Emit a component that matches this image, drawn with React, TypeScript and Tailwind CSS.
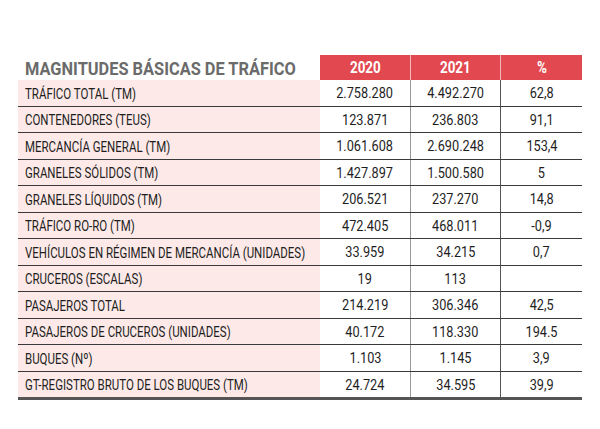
import React from "react";

const rows: [string, string, string, string][] = [
  ["TRÁFICO TOTAL (TM)", "2.758.280", "4.492.270", "62,8"],
  ["CONTENEDORES (TEUS)", "123.871", "236.803", "91,1"],
  ["MERCANCÍA GENERAL (TM)", "1.061.608", "2.690.248", "153,4"],
  ["GRANELES SÓLIDOS (TM)", "1.427.897", "1.500.580", "5"],
  ["GRANELES LÍQUIDOS (TM)", "206.521", "237.270", "14,8"],
  ["TRÁFICO RO-RO (TM)", "472.405", "468.011", "-0,9"],
  ["VEHÍCULOS EN RÉGIMEN DE MERCANCÍA (UNIDADES)", "33.959", "34.215", "0,7"],
  ["CRUCEROS (ESCALAS)", "19", "113", ""],
  ["PASAJEROS TOTAL", "214.219", "306.346", "42,5"],
  ["PASAJEROS DE CRUCEROS (UNIDADES)", "40.172", "118.330", "194.5"],
  ["BUQUES (Nº)", "1.103", "1.145", "3,9"],
  ["GT-REGISTRO BRUTO DE LOS BUQUES (TM)", "24.724", "34.595", "39,9"],
];

function Num({ v }: { v: string }) {
  return <span className="inline-block origin-center scale-x-[0.82] whitespace-nowrap">{v}</span>;
}

function Head({ v, border }: { v: string; border?: boolean }) {
  return (
    <div
      className={`bg-[#e1484f] text-white font-bold text-[16px] flex items-center justify-center pt-[1px] ${
        border ? "border-l border-[#f3b9bb]" : ""
      }`}
    >
      <span className="inline-block origin-center scale-x-[0.84]">{v}</span>
    </div>
  );
}

export default function App() {
  return (
    <div className="w-[600px] h-[429px] bg-white font-['Roboto','Liberation_Sans',sans-serif]">
      <div className="pt-[55px] pl-[18px]">
        <div className="w-[564px]">
          <div className="grid grid-cols-[302px_90px_90px_82px] h-[25px]">
            <div className="flex items-end pl-[7px] pb-[2px] text-[18px] leading-none font-bold text-[#6b6b6b] whitespace-nowrap">
              <span className="inline-block origin-left scale-x-[0.91]">MAGNITUDES BÁSICAS DE TRÁFICO</span>
            </div>
            <Head v="2020" />
            <Head v="2021" border />
            <Head v="%" border />
          </div>
          {rows.map((r, i) => {
            const last = i === rows.length - 1;
            return (
              <div
                key={i}
                className={`grid grid-cols-[302px_90px_90px_82px] box-border text-[#1e1e1e] ${
                  last ? "h-[28px] border-b-[3px] border-[#555]" : "h-[26.5px] border-b border-[#3a3a3a]"
                }`}
              >
                <div className="bg-[#fdeae8] flex items-center pl-[7px] pt-[2px] text-[15px] whitespace-nowrap overflow-hidden">
                  <span className="inline-block origin-left scale-x-[0.765]">{r[0]}</span>
                </div>
                <div className="flex items-center justify-center pt-[2px] text-[15.5px]">
                  <Num v={r[1]} />
                </div>
                <div className="flex items-center justify-center pt-[2px] text-[15.5px] border-l border-[#999]">
                  <Num v={r[2]} />
                </div>
                <div className="flex items-center justify-center pt-[2px] text-[15.5px] border-l border-[#555]">
                  <Num v={r[3]} />
                </div>
              </div>
            );
          })}
        </div>
      </div>
    </div>
  );
}
